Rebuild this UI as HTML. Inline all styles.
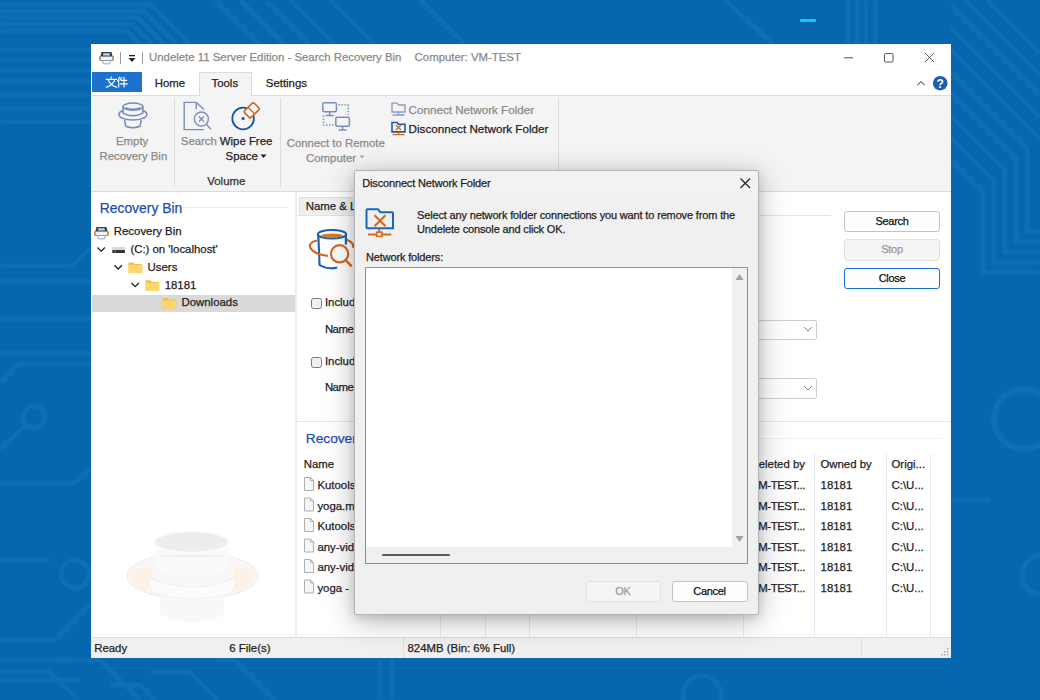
<!DOCTYPE html>
<html><head><meta charset="utf-8">
<style>
*{margin:0;padding:0;box-sizing:border-box}
html,body{width:1040px;height:700px;overflow:hidden}
body{position:relative;background:#0666ae;font-family:"Liberation Sans",sans-serif;color:#1e1e1e}
.a{position:absolute}
.t{position:absolute;white-space:nowrap;line-height:1;font-size:11.4px;-webkit-text-stroke:0.25px currentColor}
.g{color:#8a8a8a}
.d{font-size:11px;letter-spacing:-0.15px}
.btn{position:absolute;border:1px solid #c3c3c3;border-radius:3px;background:#fdfdfd;font-size:11px;letter-spacing:-0.3px;text-align:center;color:#111;-webkit-text-stroke:0.25px currentColor}
.vl{position:absolute;width:1px;background:#dcdcdc}
.hl{position:absolute;height:1px;background:#dcdcdc}
</style></head><body>

<!-- background circuit pattern -->
<svg class="a" style="left:0;top:0" width="1040" height="700" viewBox="0 0 1040 700" fill="none" stroke="#3088cc" stroke-width="4.5" opacity="0.26"><defs><filter id="bl" x="-5%" y="-5%" width="110%" height="110%"><feGaussianBlur stdDeviation="1.3"/></filter></defs><g filter="url(#bl)">
  <path d="M0 4.5h150l40 40M0 11h144l33 33M0 17.5h138l27 27M0 24h132l20 20M0 30.5h126l14 14"/>
  <path d="M215 0l44 44M240 0l44 44M265 0l44 44M290 0l44 44M330 0l44 44M420 0l44 44"/>
  <path d="M725 0l48 44M848 0v44M857 0v44M866 0v44M875 0v44"/>
  <path d="M951 160l32 32v80h57M951 138l43 43v81h46M951 116l54 54v82h35M951 94l65 65v83h24M951 72l76 76v84h13M951 50l89 89M951 28l89 89M951 6l89 89M965 0l75 75M987 0l53 53"/>
  <path d="M0 318.5h91M0 353h91M0 383l19-19h72M0 50h91M0 60h91M0 70h91M0 81h91M0 95h91M0 109h91M0 122h91M0 266h72l19-18M0 281h91"/>
  <circle cx="34" cy="417" r="11" stroke-width="4.5"/>
  <path d="M26 425l-26 24M0 483h75l16-14M0 560h50M0 640h55l36-36M0 660h70M0 680h80"/>
  <circle cx="75" cy="574" r="14"/>
  <circle cx="1024" cy="419" r="30" stroke-width="6"/>
  <circle cx="1042" cy="575" r="20" stroke-width="5"/>
  <path d="M380 658v42M392 658v42M950 500h40M215 660h20l40 40M150 672h40l28 28M110 685h30l15 15M0 672h50l28 28M60 660h40l40 40"/>
  <circle cx="702" cy="695" r="19"/>
</g>
</svg>
<div class="a" style="left:800px;top:19px;width:16px;height:3px;background:#10c8f8;border-radius:1px"></div>

<!-- main window -->
<div class="a" style="left:91px;top:44px;width:860px;height:614px;background:#fff"></div>

<!-- title bar -->
<svg class="a" style="left:91px;top:44px" width="860" height="52" viewBox="0 0 860 52">
  <!-- app icon -->
  <g transform="translate(8,7)">
    <path d="M2.5 1h10l1 4h-12z" fill="#3a3f48"/>
    <path d="M4.5 2.2h6l0.5 2.3h-7z" fill="#c9d6e6"/>
    <path d="M1 5.5h13v4h-13z" fill="#eef2f6" stroke="#6b7a8c" stroke-width="0.8"/>
    <path d="M0 5.5l1.5-0.5v4.5l-1.5-0.5z" fill="#f0821a"/>
    <path d="M15 5.5l-1.5-0.5v4.5l1.5-0.5z" fill="#f0821a"/>
    <path d="M3.5 9.5h8l-0.8 3.3h-6.4z" fill="#fff" stroke="#8090a5" stroke-width="0.8"/>
  </g>
  <rect x="29" y="8" width="1" height="12" fill="#9a9a9a"/>
  <rect x="38" y="11" width="6" height="1.3" fill="#222"/>
  <path d="M37.5 14h7l-3.5 4z" fill="#222"/>
  <rect x="51" y="8" width="1" height="12" fill="#9a9a9a"/>
  <!-- window controls -->
  <rect x="753" y="13.3" width="9" height="1" fill="#555"/>
  <rect x="793.5" y="9.5" width="8.5" height="8.5" rx="1" fill="none" stroke="#555" stroke-width="1"/>
  <path d="M834 9l9 9M843 9l-9 9" stroke="#555" stroke-width="1"/>
  <!-- collapse chevron + help -->
  <path d="M826.5 41l3.5-3.5 3.5 3.5" fill="none" stroke="#777" stroke-width="1.1"/>
  <circle cx="849.2" cy="39.2" r="7.3" fill="#1b5db5"/>
  <text x="849.2" y="43.6" font-size="12" font-weight="bold" fill="#fff" text-anchor="middle" font-family="Liberation Sans">?</text>
</svg>
<div class="t g" style="left:149px;top:52.3px">Undelete 11 Server Edition - Search Recovery Bin</div>
<div class="t g" style="left:414.6px;top:52.3px">Computer: VM-TEST</div>

<!-- tab row -->
<div class="a" style="left:92px;top:72px;width:50px;height:20px;background:#1d72cd"></div>
<svg class="a" style="left:104px;top:75px" width="26" height="15" viewBox="104 75 26 15" stroke="#fff" stroke-width="1.15" fill="none">
  <path d="M111.3 76.6v1.8M105.8 79.3h11.2M108.2 80q2.5 5.5 9 7.4M114.8 80q-2.5 5.5-9 7.4"/>
  <path d="M119.8 76.8l-2.4 4.6M118.7 79.6v8M121.6 77.2l-1.2 2.8M120.6 80.4h6.6M119.9 83.8h7.8M124 76.8v10.8"/>
</svg>
<div class="a" style="left:91px;top:95px;width:860px;height:97px;background:#f4f4f4;border-top:1px solid #dcdcdc;border-bottom:1px solid #dcdcdc"></div>
<div class="a" style="left:199px;top:72px;width:53px;height:24px;background:#f4f4f4;border:1px solid #dcdcdc;border-bottom:none"></div>
<div class="t" style="left:154.7px;top:78px">Home</div>
<div class="t" style="left:211.5px;top:78px">Tools</div>
<div class="t" style="left:265.8px;top:78px">Settings</div>

<!-- ribbon icons -->
<svg class="a" style="left:91px;top:95px" width="470" height="96" viewBox="0 0 470 96" fill="none">
  <!-- empty recovery bin -->
  <g stroke="#7489b6" stroke-width="1.5">
    <ellipse cx="41.9" cy="19.4" rx="14" ry="5.6"/>
    <path d="M32 11.6v6.5q10 5.5 19.8 0v-6.5" fill="#f4f4f4"/>
    <ellipse cx="41.9" cy="11.6" rx="9.9" ry="3.5" fill="#f4f4f4"/>
    <path d="M34.5 13.2q7.4 2.6 14.8 0" stroke-width="2.2"/>
    <path d="M33.6 25.2l1.2 6q7.1 3 14.2 0l1.2-6"/>
  </g>
  <!-- search doc -->
  <g stroke="#7a8fbc" stroke-width="1.4">
    <path d="M113 34.6h-19.8v-27.2h12l7.8 7.2"/>
    <path d="M105.2 7.5v6.8"/>
    <circle cx="110.4" cy="24" r="7" fill="#f4f4f4"/>
    <path d="M107.9 21.5l5 5M112.9 21.5l-5 5"/>
    <path d="M115.3 29.2l4.6 5"/>
  </g>
  <!-- wipe free space -->
  <circle cx="152.1" cy="23.5" r="10.8" stroke="#1257a8" stroke-width="1.8"/>
  <circle cx="152.1" cy="23.5" r="1.6" fill="#1257a8"/>
  <g transform="translate(160.7,15.3) rotate(-45)">
    <rect x="-6.8" y="-4.7" width="13.6" height="9.4" rx="1.8" fill="#f4f4f4" stroke="#c8661a" stroke-width="1.6"/>
    <path d="M-0.5-4.7v9.4" stroke="#c8661a" stroke-width="1.3"/>
  </g>
  <!-- connect remote computer -->
  <g stroke="#7b8fbb" stroke-width="1.5">
    <rect x="231.8" y="7.8" width="13.6" height="9" rx="1.5"/>
    <path d="M238.6 16.8v3M234.6 20.6h8"/>
    <rect x="244.8" y="22.3" width="13.6" height="9" rx="1.5"/>
    <path d="M251.6 31.3v3M247.6 35.1h8"/>
    <path d="M247.5 9.8h10M257.3 9.8v10M232.5 20.5v9.5h10" stroke-dasharray="1.4 1.6"/>
  </g>
  <!-- connect network folder (disabled) -->
  <g stroke="#8a9bc0" stroke-width="1.3">
    <path d="M301 8.2h5l1.5 1.8h6.5v7h-13z"/>
    <path d="M307.5 17v2.8M301.5 20h12"/>
  </g>
  <!-- disconnect network folder -->
  <path d="M301 27.5h5l1.5 1.8h6.5v7.6h-13z" stroke="#1a5ca8" stroke-width="1.6"/>
  <path d="M305 30l5 5M310 30l-5 5" stroke="#d2691e" stroke-width="1.3"/>
  <path d="M307.5 37v2.6M301.5 39.6h12" stroke="#d2691e" stroke-width="1.3"/>
</svg>

<!-- ribbon text -->
<div class="t g" style="left:116px;top:136px">Empty</div>
<div class="t g" style="left:99.5px;top:151px">Recovery Bin</div>
<div class="t g" style="left:180.8px;top:136px">Search</div>
<div class="t" style="left:219.8px;top:136px">Wipe Free</div>
<div class="t" style="left:225.6px;top:151px">Space</div>
<svg class="a" style="left:260px;top:154px" width="8" height="5"><path d="M0.5 0.5h6l-3 3.5z" fill="#222"/></svg>
<div class="t" style="left:207.3px;top:175.5px;color:#333">Volume</div>
<div class="t g" style="left:286.7px;top:137.5px">Connect to Remote</div>
<div class="t g" style="left:306px;top:152.5px">Computer</div>
<svg class="a" style="left:359px;top:155px" width="8" height="5"><path d="M0.5 0.5h5l-2.5 3z" fill="#aaa"/></svg>
<div class="t g" style="left:408.6px;top:103.8px;font-size:11.65px">Connect Network Folder</div>
<div class="t" style="left:408.6px;top:123.1px;font-size:11.65px">Disconnect Network Folder</div>
<div class="vl" style="left:174px;top:98px;height:89px"></div>
<div class="vl" style="left:280px;top:98px;height:89px"></div>
<div class="vl" style="left:558px;top:98px;height:89px"></div>

<!-- left panel -->
<div class="vl" style="left:295px;top:192px;height:445px;width:2px;background:#ececec"></div>
<div class="t" style="left:99.7px;top:201.5px;font-size:13.9px;color:#1f4db2">Recovery Bin</div>
<div class="hl" style="left:183px;top:207px;width:105px;background:#ececec"></div>
<div class="a" style="left:92px;top:295px;width:203px;height:17px;background:#d9d9d9"></div>
<svg class="a" style="left:91px;top:220px" width="100" height="95" viewBox="0 0 100 95" fill="none">
  <!-- recovery bin app icon -->
  <g transform="translate(3,6)">
    <path d="M2.5 1h10l1 4h-12z" fill="#3a3f48"/>
    <path d="M4.5 2.2h6l0.5 2.3h-7z" fill="#c9d6e6"/>
    <path d="M1 5.5h13v4h-13z" fill="#eef2f6" stroke="#6b7a8c" stroke-width="0.8"/>
    <path d="M0 5.5l1.5-0.5v4.5l-1.5-0.5z" fill="#f0821a"/>
    <path d="M15 5.5l-1.5-0.5v4.5l1.5-0.5z" fill="#f0821a"/>
    <path d="M3.5 9.5h8l-0.8 3.3h-6.4z" fill="#fff" stroke="#8090a5" stroke-width="0.8"/>
  </g>
  <!-- chevrons -->
  <path d="M6.5 27.5l3.7 3.7 3.7-3.7" stroke="#222" stroke-width="1.3"/>
  <path d="M23.5 45.3l3.7 3.7 3.7-3.7" stroke="#222" stroke-width="1.3"/>
  <path d="M40.5 63l3.7 3.7 3.7-3.7" stroke="#222" stroke-width="1.3"/>
  <!-- drive -->
  <rect x="21.3" y="27" width="12.6" height="3" fill="#d8d8d8"/>
  <rect x="21.3" y="30" width="12.6" height="3" fill="#333"/>
  <rect x="23.5" y="30.5" width="1.2" height="2" fill="#3c3"/>
  <!-- folders -->
  <g id="fold">
    <path d="M37.5 42.5h5l1.5 1.5h7.2v8.8h-13.7z" fill="#f2c24e"/>
    <rect x="37.5" y="45" width="13.7" height="7.8" fill="#fcd86a"/>
  </g>
  <use href="#fold" x="17" y="17.8"/>
  <use href="#fold" x="34" y="35.6"/>
</svg>
<div class="t" style="left:113.8px;top:226.2px">Recovery Bin</div>
<div class="t" style="left:130.4px;top:244.4px">(C:) on 'localhost'</div>
<div class="t" style="left:147.6px;top:262px">Users</div>
<div class="t" style="left:164.7px;top:279.8px">18181</div>
<div class="t" style="left:181.5px;top:297.3px">Downloads</div>

<!-- faint lifebuoy watermark -->
<svg class="a" style="left:120px;top:525px" width="145" height="105" viewBox="120 525 145 105">
  <ellipse cx="192.7" cy="576" rx="65.5" ry="23.5" fill="#f7f7f7" stroke="#efefef" stroke-width="1.2"/>
  <path d="M131 570q-4 12 12 20l20-6q-14-6-12-16z" fill="#fcf1e4"/>
  <path d="M254 570q4 12-12 20l-20-6q14-6 12-16z" fill="#fcf1e4"/>
  <path d="M160 590v25q32 14 64 0v-25z" fill="#f8f8f8"/>
  <path d="M154.6 542v28q38 12 74.4 0v-28z" fill="#f9f9f9"/>
  <path d="M160 556h63" stroke="#f1f1f1" stroke-width="2"/>
  <path d="M150 578q42 18 85 0q4 12-8 16q-35 10-69 0q-12-4-8-16z" fill="#fbfbfb" stroke="#f0f0f0" stroke-width="1"/>
  <ellipse cx="191.8" cy="542" rx="37.2" ry="10.7" fill="#ededed" stroke="#fbfbfb" stroke-width="2"/>
</svg>

<!-- middle panel -->
<div class="a" style="left:299px;top:197px;width:60px;height:19px;background:#efefef;border:1px solid #e0e0e0;border-bottom:none"></div>
<div class="hl" style="left:297px;top:215px;width:534px;background:#e3e3e3"></div>
<div class="t" style="left:305.7px;top:201.2px">Name &amp; Location</div>
<svg class="a" style="left:305px;top:226px" width="52" height="46" viewBox="305 225 52 46" fill="none">
  <path d="M346.6 238.7q8 3 6.3 8" stroke="#d2691e" stroke-width="2"/>
  <path d="M318.4 233.5l1.2 30.5q8.5 5 17.5 2M345.8 233.5v10" stroke="#1763b1" stroke-width="2" fill="#fff"/>
  <path d="M318.4 234v30q13.5 6 27.4 0v-30" fill="#fff"/>
  <path d="M318.4 233.5l1.2 30.5q8.5 5 17.5 2.5M345.8 233.5v10" stroke="#1763b1" stroke-width="2"/>
  <ellipse cx="332" cy="233.3" rx="14.2" ry="4.2" fill="#fff" stroke="#1763b1" stroke-width="2"/>
  <ellipse cx="332" cy="234.6" rx="10.5" ry="2.2" fill="#d77a25"/>
  <path d="M317 239.5q-9 2-6.5 7.5q3 6 17.5 8" stroke="#d2691e" stroke-width="2.2"/>
  <circle cx="339.6" cy="252.8" r="8.6" fill="#fff" stroke="#d2691e" stroke-width="2.2"/>
  <path d="M345.8 259.2l5.8 6.2" stroke="#d2691e" stroke-width="2.4"/>
</svg>
<div class="a" style="left:310.5px;top:297.5px;width:11px;height:11px;border:1px solid #7a7a7a;border-radius:2.5px;background:#f0f0f0"></div>
<div class="t" style="left:324.9px;top:296.7px">Include files</div>
<div class="t" style="left:324.9px;top:324px;letter-spacing:-0.5px">Name:</div>
<div class="a" style="left:310.5px;top:356.5px;width:11px;height:11px;border:1px solid #7a7a7a;border-radius:2.5px;background:#f0f0f0"></div>
<div class="t" style="left:324.9px;top:355.9px">Include files</div>
<div class="t" style="left:324.9px;top:382.3px;letter-spacing:-0.5px">Name:</div>
<div class="a" style="left:700px;top:319.5px;width:116.5px;height:20px;border:1px solid #cfcfcf;border-radius:2px;background:#fff"></div>
<svg class="a" style="left:803px;top:326px" width="10" height="7"><path d="M1 1l4 4 4-4" fill="none" stroke="#888" stroke-width="1"/></svg>
<div class="a" style="left:700px;top:378px;width:116.5px;height:20.5px;border:1px solid #cfcfcf;border-radius:2px;background:#fff"></div>
<svg class="a" style="left:803px;top:385px" width="10" height="7"><path d="M1 1l4 4 4-4" fill="none" stroke="#888" stroke-width="1"/></svg>

<!-- right buttons -->
<div class="btn" style="left:844px;top:210.5px;width:96px;height:21.5px;line-height:19.5px">Search</div>
<div class="btn" style="left:844px;top:239px;width:96px;height:21.5px;line-height:19.5px;border-color:#e2e2e2;background:#f5f5f5;color:#9a9a9a">Stop</div>
<div class="btn" style="left:844px;top:267.5px;width:96px;height:21.5px;line-height:19.5px;border-color:#1a6fd0">Close</div>

<!-- recovered files section -->
<div class="hl" style="left:297px;top:421px;width:654px;background:#e6e6e6"></div>
<div class="t" style="left:305.8px;top:432.2px;font-size:13.7px;color:#1f4db2">Recovered Files</div>
<div class="hl" style="left:420px;top:438px;width:522px;background:#efefef"></div>
<div class="t" style="left:303.7px;top:458.6px">Name</div>
<div class="t" style="left:750.5px;top:458.6px">Deleted by</div>
<div class="t" style="left:820.4px;top:458.6px">Owned by</div>
<div class="t" style="left:891.5px;top:458.6px">Origi...</div>
<div class="vl" style="left:814px;top:454px;height:183px;background:#e3ecf6"></div>
<div class="vl" style="left:885.5px;top:454px;height:183px;background:#e3ecf6"></div>
<div class="vl" style="left:929.5px;top:454px;height:183px;background:#e3ecf6"></div>
<div class="vl" style="left:742.5px;top:454px;height:183px;background:#e3ecf6"></div>
<div class="vl" style="left:440px;top:454px;height:183px;background:#e3ecf6"></div>
<div class="vl" style="left:484.5px;top:454px;height:183px;background:#e3ecf6"></div>
<div class="vl" style="left:529px;top:454px;height:183px;background:#e3ecf6"></div>
<div class="vl" style="left:636px;top:454px;height:183px;background:#e3ecf6"></div>
<svg class="a" style="left:303px;top:476px" width="12" height="130" viewBox="0 0 12 130">
  <g id="fic" fill="#f6f6f6" stroke="#b0b0b0" stroke-width="1">
    <path d="M1.5 1.5h6l3 3v10h-9z"/><path d="M7.5 1.5v3h3" fill="none"/>
  </g>
  <use href="#fic" y="20.5"/><use href="#fic" y="41"/><use href="#fic" y="61.5"/><use href="#fic" y="82"/><use href="#fic" y="102.5"/>
</svg>
<div class="t" style="left:317.4px;top:480.3px">Kutools_for_Excel.exe</div>
<div class="t" style="left:317.4px;top:500.8px">yoga.mp4</div>
<div class="t" style="left:317.4px;top:521.3px">Kutools_setup.exe</div>
<div class="t" style="left:317.4px;top:541.8px">any-video-converter.exe</div>
<div class="t" style="left:317.4px;top:562.3px">any-video.exe</div>
<div class="t" style="left:317.4px;top:582.8px">yoga - </div>
<div class="t" style="left:758.3px;top:480.3px;letter-spacing:-0.45px">M-TEST...</div>
<div class="t" style="left:758.3px;top:500.8px;letter-spacing:-0.45px">M-TEST...</div>
<div class="t" style="left:758.3px;top:521.3px;letter-spacing:-0.45px">M-TEST...</div>
<div class="t" style="left:758.3px;top:541.8px;letter-spacing:-0.45px">M-TEST...</div>
<div class="t" style="left:758.3px;top:562.3px;letter-spacing:-0.45px">M-TEST...</div>
<div class="t" style="left:758.3px;top:582.8px;letter-spacing:-0.45px">M-TEST...</div>
<div class="t" style="left:820.6px;top:480.3px">18181</div>
<div class="t" style="left:820.6px;top:500.8px">18181</div>
<div class="t" style="left:820.6px;top:521.3px">18181</div>
<div class="t" style="left:820.6px;top:541.8px">18181</div>
<div class="t" style="left:820.6px;top:562.3px">18181</div>
<div class="t" style="left:820.6px;top:582.8px">18181</div>
<div class="t" style="left:891.5px;top:480.3px">C:\U...</div>
<div class="t" style="left:891.5px;top:500.8px">C:\U...</div>
<div class="t" style="left:891.5px;top:521.3px">C:\U...</div>
<div class="t" style="left:891.5px;top:541.8px">C:\U...</div>
<div class="t" style="left:891.5px;top:562.3px">C:\U...</div>
<div class="t" style="left:891.5px;top:582.8px">C:\U...</div>

<!-- status bar -->
<div class="a" style="left:91px;top:637px;width:860px;height:21px;background:#f0f0f0;border-top:1px solid #dcdcdc"></div>
<div class="t" style="left:94.2px;top:642.8px">Ready</div>
<div class="t" style="left:229.3px;top:642.8px">6 File(s)</div>
<div class="vl" style="left:403px;top:638px;height:20px"></div>
<div class="vl" style="left:861px;top:638px;height:20px"></div>
<div class="t" style="left:407.5px;top:642.8px">824MB (Bin: 6% Full)</div>
<svg class="a" style="left:940px;top:647px" width="10" height="10"><g fill="#aaa"><rect x="7" y="1" width="1.5" height="1.5"/><rect x="4" y="4" width="1.5" height="1.5"/><rect x="7" y="4" width="1.5" height="1.5"/><rect x="1" y="7" width="1.5" height="1.5"/><rect x="4" y="7" width="1.5" height="1.5"/><rect x="7" y="7" width="1.5" height="1.5"/></g></svg>

<!-- dialog -->
<div class="a" style="left:354px;top:170px;width:405px;height:445px;background:#f0f0f0;border:1px solid #b4b4b4;border-radius:2px;box-shadow:0 6px 30px rgba(0,0,0,.28),0 3px 10px rgba(0,0,0,.12)"></div>
<div class="a" style="left:355px;top:171px;width:403px;height:27px;background:#f2f2f2"></div>
<div class="t d" style="left:362.2px;top:178.3px">Disconnect Network Folder</div>
<svg class="a" style="left:739px;top:177px" width="13" height="13"><path d="M1.5 1.5l9.5 9.5M11 1.5l-9.5 9.5" stroke="#222" stroke-width="1.2"/></svg>
<svg class="a" style="left:362px;top:204px" width="36" height="36" viewBox="362 204 36 36" fill="none">
  <path d="M367.5 209.2h10.5l2.2 3h11.8q1 0 1 1v15h-25.5q-1 0-1-1v-17q0-1 1-1z" stroke="#1a66b8" stroke-width="2"/>
  <path d="M374.5 215.2l11 11M385.5 215.2l-11 11" stroke="#d2691e" stroke-width="2.1"/>
  <path d="M379.3 228.5v4M368 234.6h23.3" stroke="#d2691e" stroke-width="2"/>
  <rect x="376.7" y="232.2" width="5.2" height="4.2" fill="#f0f0f0" stroke="#d2691e" stroke-width="1.6"/>
</svg>
<div class="t d" style="left:417px;top:210px">Select any network folder connections you want to remove from the</div>
<div class="t d" style="left:417px;top:223.5px">Undelete console and click OK.</div>
<div class="t d" style="left:366px;top:252.2px">Network folders:</div>
<div class="a" style="left:365px;top:267px;width:383px;height:297px;background:#fff;border:1px solid #8c8c8c;border-top-color:#999"></div>
<div class="a" style="left:732px;top:268px;width:15px;height:279px;background:#f0f0f0"></div>
<div class="a" style="left:366px;top:547px;width:381px;height:16px;background:#f0f0f0"></div>
<svg class="a" style="left:733px;top:270px" width="13" height="276"><path d="M2.5 10h8l-4-6z" fill="#a0a0a0"/><path d="M2.5 266h8l-4 6z" fill="#a0a0a0"/></svg>
<div class="a" style="left:382px;top:553.5px;width:68px;height:2px;background:#5a5a5a;border-radius:1px"></div>
<div class="btn" style="left:585.5px;top:580.5px;width:75px;height:21px;line-height:19px;border-color:#e3e3e3;background:#f5f5f5;color:#9a9a9a">OK</div>
<div class="btn" style="left:671.5px;top:580.5px;width:76px;height:21px;line-height:19px">Cancel</div>

</body></html>
